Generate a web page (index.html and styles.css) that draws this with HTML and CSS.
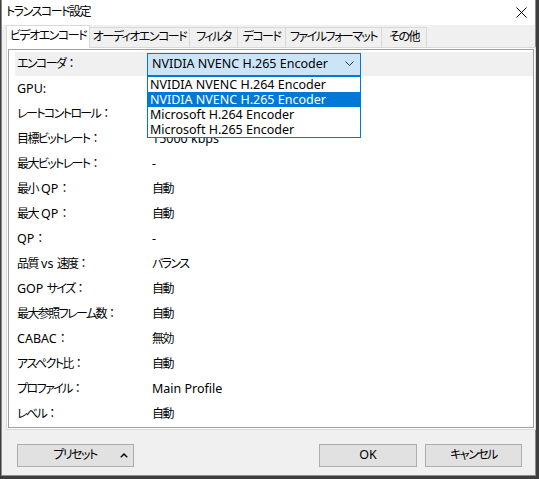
FILE: index.html
```html
<!DOCTYPE html>
<html lang="ja">
<head>
<meta charset="utf-8">
<title>トランスコード設定</title>
<link rel="stylesheet" href="styles.css">
</head>
<body>
<div class="window">
  <div class="titlebar">
    <span class="title">トランスコード設定</span>
    <span class="close"><svg width="11" height="11" viewBox="0 0 11 11"><path d="M0.5 0.5 L10.5 10.5 M10.5 0.5 L0.5 10.5" stroke="#000" stroke-width="1" fill="none"/></svg></span>
  </div>
  <div class="content">
    <div class="tabs">
      <div class="tab active t1">ビデオエンコード</div>
      <div class="tab t2">オーディオエンコード</div>
      <div class="tab t3">フィルタ</div>
      <div class="tab t4">デコード</div>
      <div class="tab t5">ファイルフォーマット</div>
      <div class="tab t6">その他</div>
    </div>
    <div class="tabpage">
      <div class="grid">
        <div class="row selected">
          <div class="label">エンコーダ<span class="c">：</span></div>
          <div class="value">
            <div class="combo">
              <span class="en ctext">NVIDIA NVENC H.265 Encoder</span>
              <svg class="chev" width="9" height="5" viewBox="0 0 9 5"><path d="M0.5 0.5 L4.5 4.5 L8.5 0.5" stroke="#333" stroke-width="1" fill="none"/></svg>
              <ul class="list en">
                <li>NVIDIA NVENC H.264 Encoder</li>
                <li class="hl">NVIDIA NVENC H.265 Encoder</li>
                <li>Microsoft H.264 Encoder</li>
                <li>Microsoft H.265 Encoder</li>
              </ul>
            </div>
          </div>
        </div>
        <div class="row"><div class="label en">GPU:</div><div class="value txt"></div></div>
        <div class="row"><div class="label">レートコントロール<span class="c">：</span></div><div class="value txt en"></div></div>
        <div class="row"><div class="label">目標ビットレート<span class="c">：</span></div><div class="value txt en">15000 kbps</div></div>
        <div class="row"><div class="label">最大ビットレート<span class="c">：</span></div><div class="value txt en">-</div></div>
        <div class="row"><div class="label">最小<span class="en"> QP</span><span class="c">：</span></div><div class="value txt">自動</div></div>
        <div class="row"><div class="label">最大<span class="en"> QP</span><span class="c">：</span></div><div class="value txt">自動</div></div>
        <div class="row"><div class="label"><span class="en">QP</span><span class="c">：</span></div><div class="value txt en">-</div></div>
        <div class="row"><div class="label">品質<span class="en"> vs </span>速度<span class="c">：</span></div><div class="value txt">バランス</div></div>
        <div class="row"><div class="label"><span class="en">GOP </span>サイズ<span class="c">：</span></div><div class="value txt">自動</div></div>
        <div class="row"><div class="label">最大参照フレーム数<span class="c">：</span></div><div class="value txt">自動</div></div>
        <div class="row"><div class="label"><span class="en">CABAC</span><span class="c">：</span></div><div class="value txt">無効</div></div>
        <div class="row"><div class="label">アスペクト比<span class="c">：</span></div><div class="value txt">自動</div></div>
        <div class="row"><div class="label">プロファイル<span class="c">：</span></div><div class="value txt en">Main Profile</div></div>
        <div class="row"><div class="label">レベル<span class="c">：</span></div><div class="value txt">自動</div></div>
      </div>
    </div>
    <div class="buttons">
      <button class="btn preset"><span class="ptext">プリセット</span><svg class="caret" width="8" height="5" viewBox="0 0 8 5"><path d="M0.8 4.2 L4 1 L7.2 4.2" stroke="#000" stroke-width="1.4" fill="none"/></svg></button>
      <div class="spacer"></div>
      <button class="btn ok en">OK</button>
      <button class="btn cancel">キャンセル</button>
    </div>
  </div>
</div>
</body>
</html>
```
FILE: styles.css
```css
* { box-sizing: border-box; }
html, body { margin: 0; padding: 0; }
body {
  background: #3e3e3e;
  width: 539px;
  height: 479px;
  overflow: hidden;
  font-family: "Noto Sans", "Noto Sans CJK JP", sans-serif;
  font-size: 12px;
  font-feature-settings: "palt";
  letter-spacing: -1.6px;
  color: #000;
}
.en { letter-spacing: 0; font-size: 12.5px; }
.c { font-feature-settings: normal; letter-spacing: 0; font-size: 12px; }
.window {
  margin-left: 1px;
  width: 535px;
  height: 476px;
  background: #f0f0f0;
  border-left: 1px solid #8c8c8c;
  border-right: 1px solid #8c8c8c;
  border-bottom: 1px solid #8c8c8c;
  display: flex;
  flex-direction: column;
}
.titlebar {
  height: 25px;
  background: #fff;
  display: flex;
  align-items: center;
  padding-left: 4px;
  padding-bottom: 1px;
}
.title { flex: 1; font-size: 12px; line-height: 16px; letter-spacing: -1.5px; }
.close { width: 11px; height: 11px; margin-right: 8px; display: flex; }
.content {
  flex: 1;
  padding: 0 1px 0 2px;
  display: flex;
  flex-direction: column;
}
.tabs {
  height: 22px;
  display: flex;
  align-items: flex-end;
  padding-left: 2px;
  position: relative;
  z-index: 2;
}
.tab {
  height: 20px;
  border: 1px solid #d9d9d9;
  border-bottom: none;
  border-left: none;
  background: #f0f0f0;
  display: flex;
  align-items: center;
  justify-content: center;
  line-height: 16px;
  padding-bottom: 1px;
  white-space: nowrap;
  letter-spacing: -1.5px;
}
.tab.active {
  height: 23px;
  margin-bottom: -1px;
  background: #fff;
  border-left: 1px solid #d9d9d9;
  padding-bottom: 3px;
}
.t1 { width: 84px; }
.t2 { width: 100px; }
.t3 { width: 48px; }
.t4 { width: 48px; }
.t5 { width: 96px; }
.t6 { width: 45px; }
.tabpage {
  margin-left: 2px;
  width: 530px;
  background: #fff;
  border: 1px solid #d9d9d9;
  padding: 1px;
}
.grid {
  border: 1px solid #a0a0a0;
  background: #fff;
  padding-top: 1px;
  height: 379px;
}
.row {
  height: 25px;
  display: flex;
  align-items: center;
  margin-left: 6px;
  line-height: 16px;
}
.row.selected { background: #f0f0f0; height: 24px; margin-top: 1px; }
.label { width: 132px; padding-left: 2px; white-space: nowrap; }
.value { flex: 1; }
.value.txt { padding-left: 5px; }
.combo {
  position: relative;
  width: 214px;
  height: 23px;
  background: #cce4f7;
  border: 1px solid #0078d7;
  display: flex;
  align-items: center;
  padding-left: 4px;
  padding-bottom: 1px;
}
.ctext { flex: 1; }
.chev { margin-right: 6px; }
.list {
  position: absolute;
  left: -1px;
  top: 22px;
  width: 214px;
  margin: 0;
  padding: 0;
  list-style: none;
  background: #fff;
  border: 1px solid #0078d7;
  z-index: 5;
}
.list li {
  height: 15px;
  line-height: 15px;
  padding-left: 2px;
  white-space: nowrap;
}
.list li.hl { background: #0078d7; color: #fff; }
.buttons {
  display: flex;
  align-items: flex-start;
  padding: 14px 12px 0 13px;
}
.spacer { flex: 1; }
.btn {
  font: inherit;
  font-feature-settings: "palt";
  letter-spacing: -1.5px;
  height: 23px;
  background: #e1e1e1;
  border: 1px solid #adadad;
  color: #000;
  padding: 0 0 1px;
  line-height: 16px;
  display: flex;
  align-items: center;
  justify-content: center;
}
.btn.en { letter-spacing: 0; font-size: 12.5px; }
.preset { width: 117px; position: relative; justify-content: flex-start; }
.ptext { width: 96px; text-align: center; padding-left: 18px; }
.caret { margin-left: 6px; }
.ok { width: 98px; margin-right: 8px; }
.cancel { width: 97px; }
```
